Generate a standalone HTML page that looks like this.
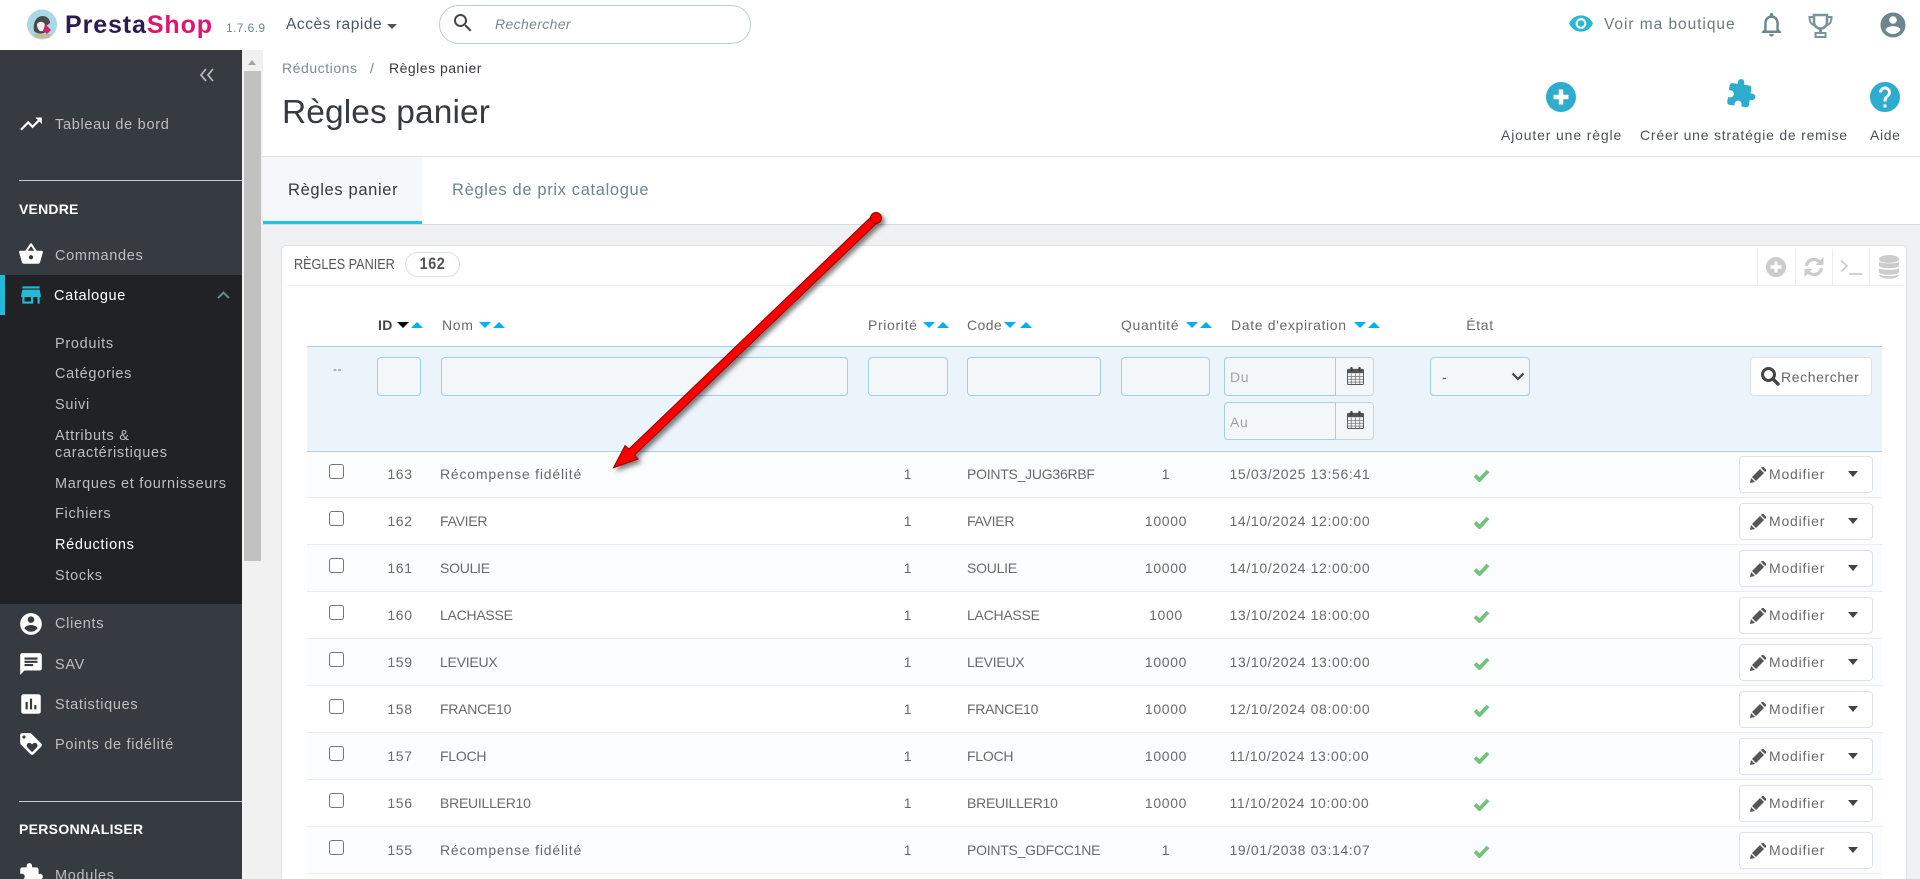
<!DOCTYPE html>
<html lang="fr"><head><meta charset="utf-8"><title>Règles panier</title>
<style>
*{box-sizing:border-box}
html,body{margin:0;padding:0;width:1920px;height:879px;overflow:hidden;background:#eff1f2;font-family:"Liberation Sans",sans-serif;color:#666}
#p{position:relative;width:1920px;height:879px;overflow:hidden;contain:strict}
.a{position:absolute}
.t{position:absolute;white-space:nowrap;line-height:20px;font-size:14px;letter-spacing:.65px}
svg{position:absolute;display:block}
.s{color:#bebebe;left:55px;font-size:14.5px;letter-spacing:.7px}
.w{fill:#fff}
.r{position:absolute;left:307px;width:1575px;height:47px;border-bottom:1px solid #e9edef;background:#fff}
.o{background:#fbfcfd}
.cb{position:absolute;left:22px;top:13px;width:15px;height:15px;border:1px solid #767676;border-radius:3px;background:#fff}
.r .t{top:13px;color:#6a6a6a}
.id{left:73px;width:40px;text-align:center}
.nm{left:133px;letter-spacing:.8px}
.t.up{letter-spacing:-.25px}
.pr{left:581px;width:40px;text-align:center}
.r .cd{left:660px;letter-spacing:-.25px}
.qt{left:829px;width:60px;text-align:center}
.dt{left:922.500px}
.ck{left:1166px;top:18px}
.btn{position:absolute;left:1432px;top:5px;width:134px;height:37px;background:#fff;border:1px solid #dce3e6;border-radius:4px}
.btn svg.p{left:10px;top:10px}
.r .btn .t{left:29px;top:7px;letter-spacing:.8px}
.btn i{position:absolute;left:108px;top:14px;border-left:5.500px solid transparent;border-right:5.500px solid transparent;border-top:6px solid #444}
.d,.u{position:absolute;width:0;height:0;border-left:6px solid transparent;border-right:6px solid transparent}
.d{border-top:6px solid #00aff0;top:322px}
.u{border-bottom:6px solid #00aff0;top:322px}
.in{position:absolute;top:357px;height:39px;background:#f3f7f9;border:1px solid #a1cfe6;border-radius:4px}
.h{color:#6a6a6a}
</style></head><body><div id="p">
<svg width="0" height="0" style="position:absolute"><defs>
<symbol id="pen" viewBox="0 0 16 16"><path d="M0 16l1-5 4 4zM2 10l8-8 4 4-8 8zM11 1l1-1c.5-.5 1-.5 1.500 0l2.500 2.500c.5.5.5 1 0 1.500l-1 1z" fill="#555"/></symbol>
<symbol id="chk" viewBox="0 0 17 13"><path d="M2 6.500l4.500 4.500L15 2" fill="none" stroke="#72c279" stroke-width="3.800"/></symbol>
<symbol id="cal" viewBox="0 0 18 19"><rect x="0.500" y="2.500" width="17" height="16" rx="1" fill="#f4f4f4" stroke="#555"/><rect x="0.500" y="2.500" width="17" height="4" fill="#555"/><rect x="3.500" y="0" width="2.500" height="5" rx="1" fill="#444"/><rect x="12" y="0" width="2.500" height="5" rx="1" fill="#444"/><path d="M4.500 7v11M9 7v11M13.500 7v11M1 10h16M1 13h16M1 16h16" stroke="#777" stroke-width=".8"/></symbol>
</defs></svg>

<!-- top bar -->
<div class="a" style="left:0;top:0;width:1920px;height:50px;background:#fff"></div>
<svg style="left:26px;top:9px" width="32" height="31" viewBox="0 0 32 31"><circle cx="16" cy="15.500" r="15" fill="#a8d8e4"/><path d="M8 22c-1-7 1-14 8-15 5 0 8 3 8 7l-4 3 1 5c-3 3-9 4-13 0z" fill="#4b4a4a"/><path d="M11 15c2-3 7-3 8 1l-2 6c-3 1-6-1-6-7z" fill="#eee"/><path d="M19 15l6 6-4 4-3-3z" fill="#d91b6d"/><path d="M7 25h18l-2 4H10z" fill="#c9b89d"/></svg>
<div class="t" style="left:65px;top:11px;font-size:25px;line-height:28px;font-weight:700;letter-spacing:.9px;color:#2a1a55">Presta<span style="color:#e5126e">Shop</span></div>
<div class="t" style="left:226px;top:18px;font-size:12px;letter-spacing:.4px;color:#6c868e">1.7.6.9</div>
<div class="t" style="left:286px;top:15px;font-size:15.500px;letter-spacing:.55px;color:#4a5a60">Accès rapide</div>
<div class="a" style="left:387px;top:24px;border-left:5px solid transparent;border-right:5px solid transparent;border-top:5px solid #555"></div>
<div class="a" style="left:439px;top:5px;width:312px;height:39px;border:1px solid #bbcdd2;border-radius:20px;background:#fff"></div>
<svg style="left:451px;top:11px" width="24" height="24" viewBox="0 0 24 24"><path d="M15.500 14h-.79l-.28-.27C15.410 12.590 16 11.110 16 9.500 16 5.910 13.090 3 9.500 3S3 5.910 3 9.500 5.910 16 9.500 16c1.610 0 3.090-.59 4.230-1.570l.27.28v.79l5 4.990L20.490 19l-4.990-5zm-6 0C7.010 14 5 11.990 5 9.500S7.010 5 9.500 5 14 7.010 14 9.500 11.990 14 9.500 14z" fill="#444"/></svg>
<div class="t" style="left:495px;top:14px;font-style:italic;font-size:14px;letter-spacing:.35px;color:#7a8a90">Rechercher</div>

<svg style="left:1568px;top:7px" width="26" height="33" viewBox="0 0 24 24" preserveAspectRatio="xMidYMid meet"><path d="M12 4.500C7 4.500 2.730 7.610 1 12c1.730 4.390 6 7.500 11 7.500s9.270-3.110 11-7.500c-1.730-4.390-6-7.500-11-7.500zM12 17c-2.760 0-5-2.240-5-5s2.240-5 5-5 5 2.240 5 5-2.240 5-5 5zm0-8c-1.660 0-3 1.340-3 3s1.340 3 3 3 3-1.340 3-3-1.340-3-3-3z" fill="#25b9d7"/></svg>
<div class="t" style="left:1604px;top:15px;font-size:15.500px;letter-spacing:.95px;color:#6c7a80">Voir ma boutique</div>
<svg style="left:1757px;top:10px" width="29" height="29" viewBox="0 0 24 24"><path d="M12 22c1.100 0 2-.9 2-2h-4c0 1.100.9 2 2 2zm6-6v-5c0-3.070-1.630-5.640-4.500-6.320V4c0-.83-.67-1.500-1.500-1.500s-1.500.67-1.500 1.500v.68C7.640 5.360 6 7.920 6 11v5l-2 2v1h16v-1l-2-2zm-2 1H8v-6c0-2.480 1.510-4.500 4-4.500s4 2.020 4 4.500v6z" fill="#6c868e"/></svg>
<svg style="left:1808px;top:13px" width="25" height="25" viewBox="0 0 25 25"><path d="M6 2h13v7c0 4-3 6.500-6.500 6.500S6 13 6 9z" fill="none" stroke="#7b949b" stroke-width="2.600"/><path d="M6 4H1.500c0 5 1.500 7.500 5.500 8.500M19 4h4.500c0 5-1.500 7.500-5.500 8.500" fill="none" stroke="#7b949b" stroke-width="2"/><path d="M12.500 15v5" stroke="#7b949b" stroke-width="3"/><rect x="7.500" y="20" width="10" height="4" fill="none" stroke="#7b949b" stroke-width="2"/></svg>
<svg style="left:1878px;top:10px" width="30" height="30" viewBox="0 0 24 24"><path d="M12 2C6.480 2 2 6.480 2 12s4.480 10 10 10 10-4.480 10-10S17.520 2 12 2zm0 3c1.660 0 3 1.340 3 3s-1.340 3-3 3-3-1.340-3-3 1.340-3 3-3zm0 14.200c-2.500 0-4.710-1.280-6-3.220.03-1.990 4-3.080 6-3.080 1.990 0 5.970 1.090 6 3.080-1.290 1.940-3.500 3.220-6 3.220z" fill="#6c868e"/></svg>

<!-- sidebar -->
<div class="a" style="left:0;top:50px;width:242px;height:829px;background:#363a41"></div>
<div class="a" style="left:0;top:275px;width:242px;height:329px;background:#202226"></div>
<div class="a" style="left:0;top:275px;width:5px;height:40px;background:#25b9d7"></div>
<svg style="left:199px;top:68px" width="16" height="14" viewBox="0 0 16 14"><path d="M7 1L2 7l5 6M14 1L9 7l5 6" fill="none" stroke="#bebebe" stroke-width="1.700"/></svg>
<svg style="left:18px;top:111px" width="26" height="26" viewBox="0 0 24 24"><path class="w" d="M16 6l2.290 2.290-4.880 4.880-4-4L2 16.590 3.410 18l6-6 4 4 6.300-6.290L22 12V6z"/></svg>
<div class="t s" style="top:115px">Tableau de bord</div>
<div class="a" style="left:19px;top:180px;width:223px;height:1px;background:#bbcdd2"></div>
<div class="t" style="left:19px;top:199px;font-weight:700;color:#fff;letter-spacing:.2px">VENDRE</div>
<svg style="left:18px;top:241px" width="26" height="26" viewBox="0 0 24 24"><path class="w" d="M17.210 9l-4.380-6.560c-.19-.28-.51-.42-.83-.42-.32 0-.64.140-.83.430L6.790 9H2c-.55 0-1 .45-1 1 0 .09.01.18.04.27l2.540 9.270c.23.84 1 1.460 1.920 1.460h13c.92 0 1.690-.62 1.930-1.460l2.540-9.270L23 10c0-.55-.45-1-1-1h-4.790zM9 9l3-4.400L15 9H9zm3 8c-1.100 0-2-.9-2-2s.9-2 2-2 2 .9 2 2-.9 2-2 2z"/></svg>
<div class="t s" style="top:246px">Commandes</div>
<svg style="left:18px;top:282px" width="26" height="26" viewBox="0 0 24 24"><path fill="#25b9d7" d="M20 4H4v2h16V4zm1 10v-2l-1-5H4l-1 5v2h1v6h10v-6h4v6h2v-6h1zm-9 4H6v-4h6v4z"/></svg>
<div class="t" style="left:54px;top:286px;color:#fff;font-size:14.500px">Catalogue</div>
<svg style="left:216px;top:290px" width="15" height="10" viewBox="0 0 15 10"><path d="M2 8l5.500-5.500L13 8" fill="none" stroke="#6c868e" stroke-width="2"/></svg>
<div class="t s" style="top:334px">Produits</div>
<div class="t s" style="top:364px">Catégories</div>
<div class="t s" style="top:395px">Suivi</div>
<div class="t s" style="top:426px">Attributs &amp;</div>
<div class="t s" style="top:443px">caractéristiques</div>
<div class="t s" style="top:474px">Marques et fournisseurs</div>
<div class="t s" style="top:504px">Fichiers</div>
<div class="t s" style="top:535px;color:#fff">Réductions</div>
<div class="t s" style="top:566px">Stocks</div>
<svg style="left:18px;top:611px" width="26" height="26" viewBox="0 0 24 24"><path class="w" d="M12 2C6.480 2 2 6.480 2 12s4.480 10 10 10 10-4.480 10-10S17.520 2 12 2zm0 3c1.660 0 3 1.340 3 3s-1.340 3-3 3-3-1.340-3-3 1.340-3 3-3zm0 14.200c-2.500 0-4.710-1.280-6-3.220.03-1.990 4-3.080 6-3.080 1.990 0 5.970 1.090 6 3.080-1.290 1.940-3.500 3.220-6 3.220z"/></svg>
<div class="t s" style="top:614px">Clients</div>
<svg style="left:18px;top:651px" width="26" height="26" viewBox="0 0 24 24"><path class="w" d="M20 2H4c-1.100 0-1.990.9-1.990 2L2 22l4-4h14c1.100 0 2-.9 2-2V4c0-1.100-.9-2-2-2zM6 9h12v2H6V9zm8 5H6v-2h8v2zm4-6H6V6h12v2z"/></svg>
<div class="t s" style="top:655px">SAV</div>
<svg style="left:18px;top:691px" width="26" height="26" viewBox="0 0 24 24"><path class="w" d="M19 3H5c-1.100 0-2 .9-2 2v14c0 1.100.9 2 2 2h14c1.100 0 2-.9 2-2V5c0-1.100-.9-2-2-2zM9 17H7v-7h2v7zm4 0h-2V7h2v10zm4 0h-2v-4h2v4z"/></svg>
<div class="t s" style="top:695px">Statistiques</div>
<svg style="left:18px;top:731px" width="26" height="26" viewBox="0 0 24 24"><path class="w" d="M21.410 11.580l-9-9C12.050 2.220 11.550 2 11 2H4c-1.100 0-2 .9-2 2v7c0 .55.22 1.050.59 1.420l9 9c.36.36.86.58 1.410.58s1.050-.22 1.410-.59l7-7c.37-.36.59-.86.59-1.410s-.23-1.060-.59-1.420zM5.500 7C4.670 7 4 6.330 4 5.500S4.670 4 5.500 4 7 4.670 7 5.500 6.330 7 5.500 7zm11.770 8.270L13 19.540l-4.270-4.270C8.280 14.810 8 14.190 8 13.500c0-1.380 1.120-2.500 2.500-2.500.69 0 1.320.28 1.770.74l.73.72.73-.73c.45-.45 1.080-.73 1.770-.73 1.380 0 2.500 1.120 2.500 2.500 0 .69-.28 1.320-.73 1.770z"/></svg>
<div class="t s" style="top:735px">Points de fidélité</div>
<div class="a" style="left:19px;top:801px;width:223px;height:1px;background:#bbcdd2"></div>
<div class="t" style="left:19px;top:819px;font-weight:700;color:#fff;letter-spacing:.3px">PERSONNALISER</div>
<svg style="left:18px;top:862px" width="26" height="26" viewBox="0 0 24 24"><path class="w" d="M20.500 11H19V7c0-1.100-.9-2-2-2h-4V3.500C13 2.120 11.880 1 10.500 1S8 2.120 8 3.500V5H4c-1.100 0-1.990.9-1.990 2v3.800H3.500c1.490 0 2.700 1.210 2.700 2.700s-1.210 2.700-2.700 2.700H2V20c0 1.100.9 2 2 2h3.800v-1.500c0-1.490 1.210-2.700 2.700-2.700 1.490 0 2.700 1.210 2.700 2.700V22H17c1.100 0 2-.9 2-2v-4h1.500c1.380 0 2.500-1.120 2.500-2.500S21.880 11 20.500 11z"/></svg>
<div class="t s" style="top:866px">Modules</div>

<!-- scrollbar -->
<div class="a" style="left:242px;top:50px;width:21px;height:829px;background:#f1f1f1"></div>
<div class="a" style="left:244px;top:71px;width:17px;height:490px;background:#c1c1c1"></div>
<div class="a" style="left:248px;top:60px;border-left:4px solid transparent;border-right:4px solid transparent;border-bottom:5px solid #a3a3a3"></div>

<!-- page head -->
<div class="a" style="left:263px;top:50px;width:1657px;height:175px;background:#fff"></div>
<div class="a" style="left:263px;top:156px;width:1657px;height:1px;background:#dfe1e2"></div>
<div class="a" style="left:263px;top:224px;width:1657px;height:1px;background:#d6dadc"></div>
<div class="t" style="left:282px;top:58px;color:#7a8d93;letter-spacing:.55px">Réductions</div>
<div class="t" style="left:370px;top:58px;color:#6c868e">/</div>
<div class="t" style="left:389px;top:58px;color:#363a41;letter-spacing:.5px">Règles panier</div>
<div class="t" style="left:282px;top:93px;font-size:33.500px;line-height:40px;letter-spacing:.1px;color:#363a41">Règles panier</div>

<svg style="left:1546px;top:82px" width="30" height="30" viewBox="0 0 30 30"><circle cx="15" cy="15" r="15" fill="#2eacce"/><path d="M15 7.500v15M7.500 15h15" stroke="#fff" stroke-width="4.500"/></svg>
<svg style="left:1726px;top:78px" width="31" height="31" viewBox="0 0 24 24"><path fill="#2eacce" d="M20.500 11H19V7c0-1.100-.9-2-2-2h-4V3.500C13 2.120 11.880 1 10.500 1S8 2.120 8 3.500V5H4c-1.100 0-1.990.9-1.990 2v3.800H3.500c1.490 0 2.700 1.210 2.700 2.700s-1.210 2.700-2.700 2.700H2V20c0 1.100.9 2 2 2h3.800v-1.500c0-1.490 1.210-2.700 2.700-2.700 1.490 0 2.700 1.210 2.700 2.700V22H17c1.100 0 2-.9 2-2v-4h1.500c1.380 0 2.500-1.120 2.500-2.500S21.880 11 20.500 11z" transform="rotate(8 12 12)"/></svg>
<svg style="left:1867px;top:79px" width="36" height="36" viewBox="0 0 24 24"><path fill="#2eacce" d="M12 2C6.480 2 2 6.480 2 12s4.480 10 10 10 10-4.480 10-10S17.520 2 12 2zm1 17h-2v-2h2v2zm2.070-7.750l-.9.92C13.450 12.900 13 13.500 13 15h-2v-.5c0-1.100.45-2.100 1.170-2.830l1.240-1.260c.37-.36.59-.86.59-1.410 0-1.100-.9-2-2-2s-2 .9-2 2H8c0-2.210 1.790-4 4-4s4 1.790 4 4c0 .88-.36 1.680-.93 2.250z"/></svg>
<div class="t" style="left:1501px;top:125px;color:#4a5357;letter-spacing:.85px">Ajouter une règle</div>
<div class="t" style="left:1640px;top:125px;color:#4a5357;letter-spacing:.78px">Créer une stratégie de remise</div>
<div class="t" style="left:1870px;top:125px;color:#4a5357;letter-spacing:.65px">Aide</div>

<!-- tabs -->
<div class="a" style="left:263px;top:157px;width:159px;height:64px;background:#f4f8fb"></div>
<div class="a" style="left:263px;top:221px;width:159px;height:3px;background:#25c4e5"></div>
<div class="t" style="left:288px;top:180px;font-size:16.500px;letter-spacing:.65px;color:#363a41">Règles panier</div>
<div class="t" style="left:452px;top:180px;font-size:16.500px;letter-spacing:.65px;color:#6c868e">Règles de prix catalogue</div>

<!-- panel -->
<div class="a" style="left:281px;top:245px;width:1626px;height:660px;background:#fff;border:1px solid #dfe3e5;border-radius:5px"></div>
<div class="a" style="left:287px;top:285px;width:1615px;height:1px;background:#eceeef"></div>
<div class="t" style="left:294px;top:255px;font-size:14.500px;letter-spacing:0;color:#555;transform:scaleX(.87);transform-origin:0 50%">RÈGLES PANIER</div>
<div class="a" style="left:405px;top:252px;width:55px;height:25px;border:1px solid #dcdfe0;border-radius:13px;background:#fff"></div>
<div class="t" style="left:405px;top:254px;width:55px;text-align:center;font-size:17px;font-weight:700;letter-spacing:.6px;color:#555;transform:scaleX(.85)">162</div>

<!-- toolbar -->
<div class="a" style="left:1757px;top:249px;width:1px;height:36px;background:#eceeef"></div>
<div class="a" style="left:1795px;top:249px;width:1px;height:36px;background:#eceeef"></div>
<div class="a" style="left:1832px;top:249px;width:1px;height:36px;background:#eceeef"></div>
<div class="a" style="left:1869px;top:249px;width:1px;height:36px;background:#eceeef"></div>
<svg style="left:1766px;top:257px" width="20" height="20" viewBox="0 0 20 20"><circle cx="10" cy="10" r="10" fill="#ccc"/><path d="M10 4.500v11M4.500 10h11" stroke="#fff" stroke-width="3.200"/></svg>
<svg style="left:1804px;top:257px" width="20" height="20" viewBox="0 0 20 20"><path d="M2.500 9c.5-4 3.500-6.500 7.500-6.500 2.500 0 4.300 1 5.500 2.300M17.500 11c-.5 4-3.500 6.500-7.500 6.500-2.500 0-4.300-1-5.500-2.300" fill="none" stroke="#ccc" stroke-width="3.200"/><path d="M19.500 0v8h-8zM.5 20v-8h8z" fill="#ccc"/></svg>
<svg style="left:1840px;top:259px" width="23" height="17" viewBox="0 0 23 17"><path d="M1 1.500l6 5.500-6 5.500" fill="none" stroke="#ccc" stroke-width="1.800"/><path d="M9 15h13" stroke="#ccc" stroke-width="1.800"/></svg>
<svg style="left:1879px;top:255px" width="20" height="24" viewBox="0 0 20 24"><ellipse cx="10" cy="4" rx="10" ry="4" fill="#ccc"/><path d="M0 6.500c2 2.500 18 2.500 20 0V11c-2 3-18 3-20 0zM0 13c2 2.500 18 2.500 20 0v4.500c-2 3-18 3-20 0zM0 19.200c2 2.500 18 2.500 20 0V20c-2 5-18 5-20 0z" fill="#ccc"/></svg>

<!-- table head -->
<div class="t h" style="left:378px;top:315px;font-weight:700;color:#444;letter-spacing:.4px">ID</div>
<i class="d" style="left:397px;border-top-color:#000"></i><i class="u" style="left:411px"></i>
<div class="t h" style="left:442px;top:315px">Nom</div>
<i class="d" style="left:479px"></i><i class="u" style="left:493px"></i>
<div class="t h" style="left:868px;top:315px">Priorité</div>
<i class="d" style="left:923px"></i><i class="u" style="left:937px"></i>
<div class="t h" style="left:967px;top:315px;letter-spacing:.4px">Code</div>
<i class="d" style="left:1004px"></i><i class="u" style="left:1020px"></i>
<div class="t h" style="left:1121px;top:315px">Quantité</div>
<i class="d" style="left:1186px"></i><i class="u" style="left:1200px"></i>
<div class="t h" style="left:1231px;top:315px">Date d'expiration</div>
<i class="d" style="left:1354px"></i><i class="u" style="left:1368px"></i>
<div class="t h" style="left:1440px;top:315px;width:80px;text-align:center">État</div>

<!-- filter row -->
<div class="a" style="left:307px;top:346px;width:1575px;height:106px;background:#ebf4fa;border-top:1px solid #a5d3e8"></div>
<div class="t" style="left:333px;top:359px;font-size:12px">--</div>
<div class="in" style="left:377px;width:44px"></div>
<div class="in" style="left:441px;width:407px"></div>
<div class="in" style="left:868px;width:80px"></div>
<div class="in" style="left:967px;width:134px"></div>
<div class="in" style="left:1121px;width:89px"></div>
<div class="in" style="left:1224px;width:112px;border-radius:4px 0 0 4px"></div>
<div class="a" style="left:1336px;top:357px;width:38px;height:39px;background:#f3f7f9;border:1px solid #c6d5da;border-left:0;border-radius:0 4px 4px 0"></div>
<svg style="left:1347px;top:367px" width="17" height="18"><use href="#cal"/></svg>
<div class="t" style="left:1230px;top:367px;color:#a0a4a6">Du</div>
<div class="in" style="left:1224px;top:402px;height:38px;width:112px;border-radius:4px 0 0 4px"></div>
<div class="a" style="left:1336px;top:402px;width:38px;height:38px;background:#f3f7f9;border:1px solid #c6d5da;border-left:0;border-radius:0 4px 4px 0"></div>
<svg style="left:1347px;top:411px" width="17" height="18"><use href="#cal"/></svg>
<div class="t" style="left:1230px;top:412px;color:#a0a4a6">Au</div>
<div class="in" style="left:1430px;width:100px"></div>
<div class="t" style="left:1442px;top:367px;color:#555">-</div>
<svg style="left:1511px;top:372px" width="14" height="9" viewBox="0 0 14 9"><path d="M1.500 1.500L7 7l5.500-5.500" fill="none" stroke="#444" stroke-width="2.200"/></svg>
<div class="a" style="left:1750px;top:357px;width:122px;height:39px;background:#fff;border:1px solid #dce3e6;border-radius:4px"></div>
<svg style="left:1760px;top:366px" width="20" height="20" viewBox="0 0 20 20"><circle cx="8.500" cy="8.500" r="6" fill="none" stroke="#444" stroke-width="3"/><path d="M13 13l5 5" stroke="#444" stroke-width="3.400" stroke-linecap="round"/></svg>
<div class="t" style="left:1781px;top:367px;color:#666;letter-spacing:.6px">Rechercher</div>

<!-- rows -->
<div class="r o" style="top:451px"><span class="cb"></span><div class="t id">163</div><div class="t nm">Récompense fidélité</div><div class="t pr">1</div><div class="t cd">POINTS_JUG36RBF</div><div class="t qt">1</div><div class="t dt">15/03/2025 13:56:41</div><svg class="ck" width="17" height="13"><use href="#chk"/></svg><div class="btn"><svg class="p" width="16" height="16"><use href="#pen"/></svg><div class="t">Modifier</div><i></i></div></div>
<div class="r" style="top:498px"><span class="cb"></span><div class="t id">162</div><div class="t nm up">FAVIER</div><div class="t pr">1</div><div class="t cd">FAVIER</div><div class="t qt">10000</div><div class="t dt">14/10/2024 12:00:00</div><svg class="ck" width="17" height="13"><use href="#chk"/></svg><div class="btn"><svg class="p" width="16" height="16"><use href="#pen"/></svg><div class="t">Modifier</div><i></i></div></div>
<div class="r o" style="top:545px"><span class="cb"></span><div class="t id">161</div><div class="t nm up">SOULIE</div><div class="t pr">1</div><div class="t cd">SOULIE</div><div class="t qt">10000</div><div class="t dt">14/10/2024 12:00:00</div><svg class="ck" width="17" height="13"><use href="#chk"/></svg><div class="btn"><svg class="p" width="16" height="16"><use href="#pen"/></svg><div class="t">Modifier</div><i></i></div></div>
<div class="r" style="top:592px"><span class="cb"></span><div class="t id">160</div><div class="t nm up">LACHASSE</div><div class="t pr">1</div><div class="t cd">LACHASSE</div><div class="t qt">1000</div><div class="t dt">13/10/2024 18:00:00</div><svg class="ck" width="17" height="13"><use href="#chk"/></svg><div class="btn"><svg class="p" width="16" height="16"><use href="#pen"/></svg><div class="t">Modifier</div><i></i></div></div>
<div class="r o" style="top:639px"><span class="cb"></span><div class="t id">159</div><div class="t nm up">LEVIEUX</div><div class="t pr">1</div><div class="t cd">LEVIEUX</div><div class="t qt">10000</div><div class="t dt">13/10/2024 13:00:00</div><svg class="ck" width="17" height="13"><use href="#chk"/></svg><div class="btn"><svg class="p" width="16" height="16"><use href="#pen"/></svg><div class="t">Modifier</div><i></i></div></div>
<div class="r" style="top:686px"><span class="cb"></span><div class="t id">158</div><div class="t nm up">FRANCE10</div><div class="t pr">1</div><div class="t cd">FRANCE10</div><div class="t qt">10000</div><div class="t dt">12/10/2024 08:00:00</div><svg class="ck" width="17" height="13"><use href="#chk"/></svg><div class="btn"><svg class="p" width="16" height="16"><use href="#pen"/></svg><div class="t">Modifier</div><i></i></div></div>
<div class="r o" style="top:733px"><span class="cb"></span><div class="t id">157</div><div class="t nm up">FLOCH</div><div class="t pr">1</div><div class="t cd">FLOCH</div><div class="t qt">10000</div><div class="t dt">11/10/2024 13:00:00</div><svg class="ck" width="17" height="13"><use href="#chk"/></svg><div class="btn"><svg class="p" width="16" height="16"><use href="#pen"/></svg><div class="t">Modifier</div><i></i></div></div>
<div class="r" style="top:780px"><span class="cb"></span><div class="t id">156</div><div class="t nm up">BREUILLER10</div><div class="t pr">1</div><div class="t cd">BREUILLER10</div><div class="t qt">10000</div><div class="t dt">11/10/2024 10:00:00</div><svg class="ck" width="17" height="13"><use href="#chk"/></svg><div class="btn"><svg class="p" width="16" height="16"><use href="#pen"/></svg><div class="t">Modifier</div><i></i></div></div>
<div class="r o" style="top:827px"><span class="cb"></span><div class="t id">155</div><div class="t nm">Récompense fidélité</div><div class="t pr">1</div><div class="t cd">POINTS_GDFCC1NE</div><div class="t qt">1</div><div class="t dt">19/01/2038 03:14:07</div><svg class="ck" width="17" height="13"><use href="#chk"/></svg><div class="btn"><svg class="p" width="16" height="16"><use href="#pen"/></svg><div class="t">Modifier</div><i></i></div></div>
<div class="a" style="left:307px;top:451px;width:1575px;height:1px;background:#a5d3e8"></div>

<!-- red arrow -->
<svg style="left:0;top:0;pointer-events:none" width="1920" height="879" viewBox="0 0 1920 879">
<defs><filter id="sh" x="-10%" y="-10%" width="120%" height="120%"><feDropShadow dx="3" dy="3" stdDeviation="2.500" flood-color="#000" flood-opacity=".5"/></filter></defs>
<g filter="url(#sh)" fill="#fb0000" stroke="#8f0000" stroke-width="1"><path d="M873 215L629 449l-4-3.300-11.500 22 24.500-8.700-3.500-4L879 221z"/><circle cx="876" cy="218" r="5.500"/></g>
</svg>
</div></body></html>
